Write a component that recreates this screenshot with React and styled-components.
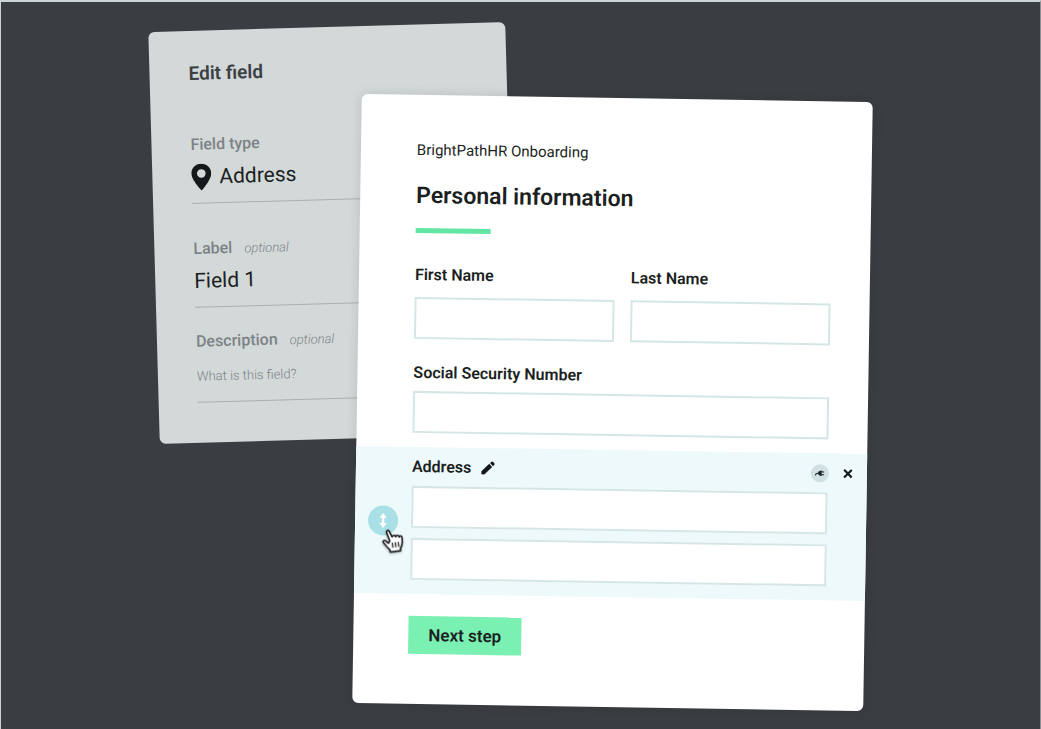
import styled, { createGlobalStyle, css } from 'styled-components';

const App = () => {
    return (
      <>
        <GlobalStyle />
        <Stage>
          <EditCard>
            <EditTitle>Edit field</EditTitle>
            <EditRow $after={35}>
              <EditHead>
                <EditLabel htmlFor="type">Field type</EditLabel>
              </EditHead>
              <EditControl>
                <PinIcon />
                <EditSelect id="type" defaultValue="address">
                  <option value="address">Address</option>
                </EditSelect>
              </EditControl>
            </EditRow>
            <EditRow $after={24}>
              <EditHead>
                <EditLabel htmlFor="label">Label</EditLabel>
                <Optional>optional</Optional>
              </EditHead>
              <EditControl>
                <EditInput id="label" type="text" defaultValue="Field 1" />
              </EditControl>
            </EditRow>
            <EditRow $after={0}>
              <EditHead>
                <EditLabel htmlFor="description">Description</EditLabel>
                <Optional>optional</Optional>
              </EditHead>
              <EditControl $low>
                <EditInput id="description" type="text" $small placeholder="What is this field?" />
              </EditControl>
            </EditRow>
          </EditCard>

          <FormCard>
            <Intro>
              <Crumb>BrightPathHR Onboarding</Crumb>
              <Title>Personal information</Title>
              <Accent />
            </Intro>
            <Columns>
              <Field $gap={12}>
                <Label htmlFor="first">First Name</Label>
                <Input id="first" type="text" />
              </Field>
              <Field $gap={12}>
                <Label htmlFor="last">Last Name</Label>
                <Input id="last" type="text" />
              </Field>
            </Columns>
            <Columns>
              <Field $gap={8}>
                <Label htmlFor="ssn">Social Security Number</Label>
                <Input id="ssn" type="text" />
              </Field>
            </Columns>
            <Selected>
              <Handle type="button" aria-label="Move field">
                <MoveIcon />
                <HandCursor />
              </Handle>
              <SelectedBody>
                <SelectedHead>
                  <Label htmlFor="address1">Address</Label>
                  <IconButton type="button" aria-label="Rename">
                    <PencilIcon />
                  </IconButton>
                  <Spacer />
                  <IconButton type="button" $round aria-label="Connect">
                    <PlugIcon />
                  </IconButton>
                  <IconButton type="button" aria-label="Remove">
                    <CrossIcon />
                  </IconButton>
                </SelectedHead>
                <Lines>
                  <Input id="address1" type="text" />
                  <Input aria-label="Address line 2" type="text" />
                </Lines>
              </SelectedBody>
            </Selected>
            <NextButton type="button">Next step</NextButton>
          </FormCard>
        </Stage>
      </>
    );
}

export default App;

const PinIcon = () => (
  <svg width="20" height="27" viewBox="0 0 20 27" aria-hidden="true">
    <path
      fill="#15191b"
      fillRule="evenodd"
      d="M10 0C4.400 0 0 4.300 0 9.700C0 16.500 10 27 10 27S20 16.500 20 9.700C20 4.300 15.600 0 10 0ZM10 5.500A4.300 4.300 0 1 1 10 14.100A4.300 4.300 0 1 1 10 5.500Z"
    />
  </svg>
)

const PencilIcon = () => (
  <svg width="14" height="14" viewBox="0 0 14 14" aria-hidden="true">
    <path fill="#15191b" d="M0.500 10.400L8.200 2.800L11.200 5.800L3.500 13.400H0.500ZM9 2L10.500 0.600Q11.200 0.200 11.800 0.600L13.400 2.200Q13.800 2.900 13.400 3.500L12 5Z" />
  </svg>
)

const PlugIcon = () => (
  <svg width="10" height="8" viewBox="0 0 10 8" aria-hidden="true">
    <path d="M0.500 6.200Q0.600 4 3 4" fill="none" stroke="#1d2527" />
    <path d="M3 4Q3.300 1.500 6.800 1.300V6.700Q3.300 6.500 3 4Z" fill="#1d2527" />
    <path d="M6.500 2.600H9.200M6.500 5.400H9.200" stroke="#1d2527" strokeWidth="1.100" />
  </svg>
)

const CrossIcon = () => (
  <svg width="10" height="10" viewBox="0 0 10 10" aria-hidden="true">
    <path d="M1.200 1.200L8.800 8.800M8.800 1.200L1.200 8.800" stroke="#15191b" strokeWidth="2.200" />
  </svg>
)

const MoveIcon = () => (
  <svg width="8" height="16" viewBox="0 0 8 16" aria-hidden="true">
    <path d="M4 0.500L7.700 5.500H5.200V10.500H7.700L4 15.500L0.300 10.500H2.800V5.500H0.300Z" fill="#fff" />
  </svg>
)

const HandCursor = () => (
  <Cursor viewBox="0 0 22 25" aria-hidden="true">
    <path
      d="M6.300 14.200L3.800 11.400C2.900 10.500 1.200 10.800 1.200 12.100C1.200 13 2.200 13.900 3.200 15.600C4.300 17.500 5.300 19.200 7 20.600V23H17.500V20.800C18.900 18.900 19.900 17.100 20.200 14.600L20.500 9.800C20.500 8 18.200 7.800 17.800 9.300C17.700 7.200 15 6.900 14.400 8.600C14.100 6.700 11.300 6.500 10.700 8.300L8.500 2.500C7.800 0.700 5.300 1.500 5.800 3.400L8 12Z"
      fill="#fff"
      stroke="#111"
      strokeWidth="1.500"
      strokeLinejoin="round"
      transform="rotate(-8 11 12)"
    />
    <path d="M10.200 14V19M13.200 14V19M16.200 14V19" stroke="#111" strokeWidth="1.200" transform="rotate(-8 11 12)" />
  </Cursor>
)

const GlobalStyle = createGlobalStyle`
    * {
        box-sizing: border-box;
    }
    body {
        margin: 0;
        background: #3a3e42;
        font-family: Roboto, "Liberation Sans", sans-serif;
        color: #1b1f21;
    }
    button, input, select {
        font-family: inherit;
        color: inherit;
    }
`
const Stage = styled.main`
    display: flex;
    justify-content: center;
    align-items: flex-start;
    min-height: 100vh;
    padding: 25px 20px 0 0;
    border-top: 2px solid #cbd5d6;
    border-left: 1px solid #cbd5d6;
    border-right: 1px solid #8c9092;
    overflow: hidden;
`
const EditCard = styled.section`
    flex: 0 1 357px;
    padding: 31px 38px 40px 39px;
    border-radius: 6px;
    background: #d3d8d9;
    transform: rotate(-1.6deg);
`
const EditTitle = styled.h2`
    margin: 0 0 49px;
    font-size: 19px;
    line-height: 24px;
    font-weight: 600;
    color: #3b4043;
`
const EditRow = styled.div`
    margin-bottom: ${props => props.$after}px;
    border-bottom: 1px solid #a9afb1;
`
const EditHead = styled.div`
    display: flex;
    align-items: center;
    gap: 12px;
    height: 20px;
`
const EditLabel = styled.label`
    font-size: 16px;
    line-height: 20px;
    font-weight: 500;
    color: #7c8385;
`
const Optional = styled.span`
    font-size: 13px;
    font-style: italic;
    font-weight: 300;
    color: #7c8385;
`
const EditControl = styled.div`
    display: flex;
    align-items: center;
    gap: 8px;
    height: ${props => props.$low ? 50 : 48}px;
    padding-bottom: ${props => props.$low ? 0 : 4}px;
`
const editText = css`
    flex: 1;
    min-width: 0;
    padding: 0;
    border: 0;
    outline: 0;
    background: none;
    font-size: 21px;
    line-height: 28px;
`
const EditSelect = styled.select`
    ${editText}
    appearance: none;
`
const EditInput = styled.input`
    ${editText}
    font-size: ${props => props.$small ? 13 : 21}px;

    &::placeholder {
        color: #7c8385;
        font-weight: 300;
        opacity: 1;
    }
`
const FormCard = styled.form`
    position: relative;
    flex: 0 1 511px;
    margin: 71px 0 0 -154px;
    padding: 44px 0 50px;
    border-radius: 6px;
    background: #fff;
    box-shadow: 0 0 12px rgba(0, 0, 0, 0.12);
    transform: rotate(0.9deg);
`
const Intro = styled.header`
    padding: 0 39px 0 56px;
    margin-bottom: 32px;
`
const Crumb = styled.p`
    margin: 0 0 20px;
    font-size: 15px;
    line-height: 22px;
`
const Title = styled.h1`
    margin: 0 0 17px;
    font-size: 23px;
    line-height: 30px;
    font-weight: 600;
`
const Accent = styled.div`
    width: 75px;
    height: 5px;
    background: #63e6a3;
`
const Columns = styled.div`
    display: flex;
    gap: 16px;
    padding: 0 39px 0 56px;

    & + & {
        margin-top: 24px;
    }
`
const Field = styled.div`
    flex: 1;
    display: flex;
    flex-direction: column;
    gap: ${props => props.$gap}px;
    min-width: 0;
`
const Label = styled.label`
    font-size: 16px;
    line-height: 20px;
    font-weight: 600;
`
const Input = styled.input`
    width: 100%;
    height: 42px;
    padding: 0 12px;
    border: 2px solid #d5e6e7;
    border-radius: 0;
    outline: 0;
    background: #fff;
    font-size: 16px;
`
const Selected = styled.div`
    display: flex;
    align-items: center;
    gap: 13px;
    margin: 14px 0 22px;
    padding: 0 14px 0 13px;
    background: #edf9fb;
`
const Handle = styled.button`
    position: relative;
    flex: none;
    display: flex;
    align-items: center;
    justify-content: center;
    width: 30px;
    height: 30px;
    padding: 0;
    border: 0;
    border-radius: 50%;
    background: #a9e0e5;
`
const Cursor = styled.svg`
    position: absolute;
    top: 23px;
    left: 14px;
    width: 22px;
    height: 25px;
    filter: drop-shadow(0 1px 1px rgba(0, 0, 0, 0.35));
`
const SelectedBody = styled.div`
    flex: 1;
    min-width: 0;
    padding: 10px 0 14px;
`
const SelectedHead = styled.div`
    display: flex;
    align-items: center;
    height: 20px;
    margin-bottom: 9px;
`
const IconButton = styled.button`
    display: flex;
    align-items: center;
    justify-content: center;
    height: 18px;
    padding: 0;
    border: 0;
    background: none;

    ${Label} + & {
        margin-left: 10px;
    }

    ${props => props.$round && css`
        width: 18px;
        margin-right: 14px;
        border-radius: 50%;
        background: #d0e0e3;
    `}
`
const Spacer = styled.div`
    flex: 1;
`
const Lines = styled.div`
    display: flex;
    flex-direction: column;
    gap: 10px;
    margin-right: 25px;
`
const NextButton = styled.button`
    display: block;
    height: 38px;
    margin-left: 55px;
    padding: 0 20px;
    border: 0;
    background: #7af0b2;
    font-size: 17px;
    font-weight: 600;
`
